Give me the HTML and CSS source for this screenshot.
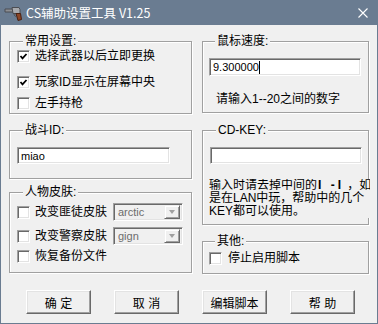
FILE: index.html
```html
<!DOCTYPE html>
<html lang="zh-CN">
<head>
  <meta charset="UTF-8">
  <title>CS辅助设置工具 V1.25</title>
  <link rel="stylesheet" href="styles.css">
</head>
<body>
<div class="window">
  <div class="titlebar">
    <svg class="app-icon" viewBox="0 0 18 16">
      <path d="M1 4h10v3H1z" fill="#8d8f93" stroke="#4b4d52" stroke-width="1"/>
      <path d="M8 2.5h7l1 2v4H9z" fill="#a7a9ad" stroke="#4b4d52" stroke-width="1"/>
      <path d="M12 8.5h4.5l1 6-3.5 1z" fill="#8b4526" stroke="#4a2010" stroke-width="1"/>
      <path d="M10 8.5c0 2 1 3 2.5 3" fill="none" stroke="#4b4d52" stroke-width="1"/>
    </svg>
    <span class="title">CS辅助设置工具 V1.25</span>
    <svg class="close" viewBox="0 0 10 10">
      <path d="M0.5 0.5l9 9M9.5 0.5l-9 9" stroke="#fff" stroke-width="1.1"/>
    </svg>
  </div>

  <div class="client">
    <div class="columns">
      <div class="col col-left">
        <div class="group g-common">
          <span class="caption">常用设置:</span>
          <label class="check first"><span class="box"><svg viewBox="0 0 9 9"><polyline points="1.5,4 3.5,6.3 7.5,2" /></svg></span>选择武器以后立即更换</label>
          <label class="check"><span class="box"><svg viewBox="0 0 9 9"><polyline points="1.5,4 3.5,6.3 7.5,2" /></svg></span>玩家ID显示在屏幕中央</label>
          <label class="check last"><span class="box"></span>左手持枪</label>
        </div>

        <div class="group g-id">
          <span class="caption">战斗ID:</span>
          <div class="edit id-edit">miao</div>
        </div>

        <div class="group g-skin">
          <span class="caption">人物皮肤:</span>
          <div class="skin-row">
            <label class="check"><span class="box"></span>改变匪徒皮肤</label>
            <div class="combo"><span class="combo-text">arctic</span><span class="combo-btn"></span></div>
          </div>
          <div class="skin-row second">
            <label class="check"><span class="box"></span>改变警察皮肤</label>
            <div class="combo"><span class="combo-text">gign</span><span class="combo-btn"></span></div>
          </div>
          <label class="check restore"><span class="box"></span>恢复备份文件</label>
        </div>
      </div>

      <div class="col col-right">
        <div class="group g-speed">
          <span class="caption">鼠标速度:</span>
          <div class="edit speed-edit">9.300000<span class="caret"></span></div>
          <p class="hint">请输入1--20之间的数字</p>
        </div>

        <div class="group g-key">
          <span class="caption">CD-KEY:</span>
          <div class="edit key-edit"></div>
          <div class="note">
            <span>输入时请去掉中间的<b>I -I</b> ，如</span>
            <span>是在LAN中玩，帮助中的几个</span>
            <span>KEY都可以使用。</span>
          </div>
        </div>

        <div class="group g-other">
          <span class="caption">其他:</span>
          <label class="check"><span class="box"></span>停止启用脚本</label>
        </div>
      </div>
    </div>

    <div class="buttons">
      <button class="btn">确 定</button>
      <button class="btn">取 消</button>
      <button class="btn">编辑脚本</button>
      <button class="btn">帮 助</button>
    </div>
  </div>
</div>
</body>
</html>
```

FILE: styles.css
```css
* {
  margin: 0;
  padding: 0;
  box-sizing: border-box;
}

body {
  font: 12px "Liberation Sans", "Noto Sans CJK SC", sans-serif;
  color: #000;
}

.window {
  width: 378px;
  height: 324px;
  border: 1px solid #6a7c91;
  border-top: 0;
  background: #f0f0f0;
}

/* 标题栏 */
.titlebar {
  height: 25px;
  background: #6a7c91;
  display: flex;
  align-items: center;
  padding-left: 3px;
  color: #fff;
}

.app-icon {
  width: 18px;
  height: 16px;
}

.title {
  margin-left: 4px;
  font: 12.5px "Noto Sans CJK SC", sans-serif;
}

.close {
  width: 10px;
  height: 10px;
  margin-left: auto;
  margin-right: 9px;
}

/* 内容区 */
.client {
  padding: 16px 8px 0;
}

.columns {
  display: flex;
  gap: 10px;
}

.col-left {
  width: 183px;
}

.col-right {
  width: 167px;
}

.group {
  border: 1px solid #a0a0a0;
  box-shadow: 1px 1px 0 #fff, inset 1px 1px 0 #fff;
}

.caption {
  display: block;
  width: fit-content;
  margin: -8px 0 0 6px;
  padding: 0 2px;
  line-height: 14px;
  background: #f0f0f0;
}

.check {
  display: flex;
  align-items: center;
  gap: 5px;
  height: 13px;
  line-height: 13px;
  white-space: nowrap;
}

.box {
  flex: none;
  width: 13px;
  height: 13px;
  background: #fff;
  border: 1px solid;
  border-color: #a0a0a0 #fff #fff #a0a0a0;
  box-shadow: inset 1px 1px 0 #696969, inset -1px -1px 0 #e3e3e3;
  display: flex;
  align-items: center;
  justify-content: center;
}

.box svg {
  width: 9px;
  height: 9px;
}

.box polyline {
  fill: none;
  stroke: #000;
  stroke-width: 1.8;
}

.edit {
  background: #fff;
  border: 1px solid;
  border-color: #a0a0a0 #fff #fff #a0a0a0;
  box-shadow: inset 1px 1px 0 #696969, inset -1px -1px 0 #e3e3e3;
  padding-left: 3px;
  font-size: 11px;
  display: flex;
  align-items: center;
}

.caret {
  width: 1px;
  height: 13px;
  background: #000;
}

/* 常用设置 */
.g-common {
  height: 73px;
  padding-left: 7px;
}

.g-common .check {
  margin-top: 13px;
}

.g-common .check.first {
  margin-top: 2px;
}

.g-common .check.last {
  margin-top: 8px;
}

/* 战斗ID */
.g-id {
  height: 49px;
  margin-top: 16px;
  padding-left: 7px;
}

.id-edit {
  width: 153px;
  height: 17px;
  margin-top: 10px;
}

/* 人物皮肤 */
.g-skin {
  height: 81px;
  margin-top: 13px;
  padding-left: 7px;
}

.skin-row {
  display: flex;
  align-items: center;
  height: 18px;
  margin-top: 4px;
}

.skin-row.second {
  margin-top: 6px;
}

.skin-row .check {
  width: 96px;
}

.restore {
  margin-top: 5px;
}

.combo {
  width: 70px;
  height: 18px;
  display: flex;
  align-items: center;
  border: 1px solid;
  border-color: #a0a0a0 #fff #fff #a0a0a0;
  box-shadow: inset 1px 1px 0 #696969, inset -1px -1px 0 #e3e3e3;
  padding: 2px;
  background: #f0f0f0;
}

.combo-text {
  flex: 1;
  padding-left: 2px;
  font-size: 11px;
  color: #6d6d6d;
}

.combo-btn {
  width: 16px;
  height: 14px;
  background: #f0f0f0;
  border: 1px solid;
  border-color: #f0f0f0 #696969 #696969 #f0f0f0;
  box-shadow: inset 1px 1px 0 #fff, inset -1px -1px 0 #a0a0a0;
  position: relative;
}

.combo-btn::after {
  content: "";
  position: absolute;
  left: 4px;
  top: 4px;
  border-left: 3.5px solid transparent;
  border-right: 3.5px solid transparent;
  border-top: 4px solid #a0a0a0;
}

/* 鼠标速度 */
.g-speed {
  height: 72px;
  padding-left: 6px;
}

.speed-edit {
  width: 152px;
  height: 18px;
  margin-top: 10px;
}

.hint {
  margin: 16px 0 0 7px;
  line-height: 14px;
}

/* CD-KEY */
.g-key {
  height: 95px;
  margin-top: 17px;
  padding-left: 7px;
}

.key-edit {
  width: 152px;
  height: 17px;
  margin-top: 10px;
}

.note {
  width: 161px;
  margin: 15px 0 0 -1px;
  line-height: 13px;
  background: #f0f0f0;
  overflow: hidden;
  position: relative;
}

.note span {
  display: block;
  white-space: nowrap;
}

.note b {
  font-weight: bold;
  letter-spacing: 3px;
  padding-left: 1px;
}

/* 其他 */
.g-other {
  height: 33px;
  margin-top: 16px;
  padding-left: 6px;
}

.g-other .check {
  margin-top: 4px;
  gap: 6px;
}

/* 按钮 */
.buttons {
  display: flex;
  gap: 23px;
  margin-top: 16px;
  padding-left: 17px;
}

.btn {
  width: 65px;
  height: 24px;
  font: 12px "Liberation Sans", "Noto Sans CJK SC", sans-serif;
  color: #000;
  background: #f0f0f0;
  border: 1px solid;
  border-color: #fff #696969 #696969 #fff;
  box-shadow: inset -1px -1px 0 #a0a0a0, inset 1px 1px 0 #e3e3e3;
}
```
